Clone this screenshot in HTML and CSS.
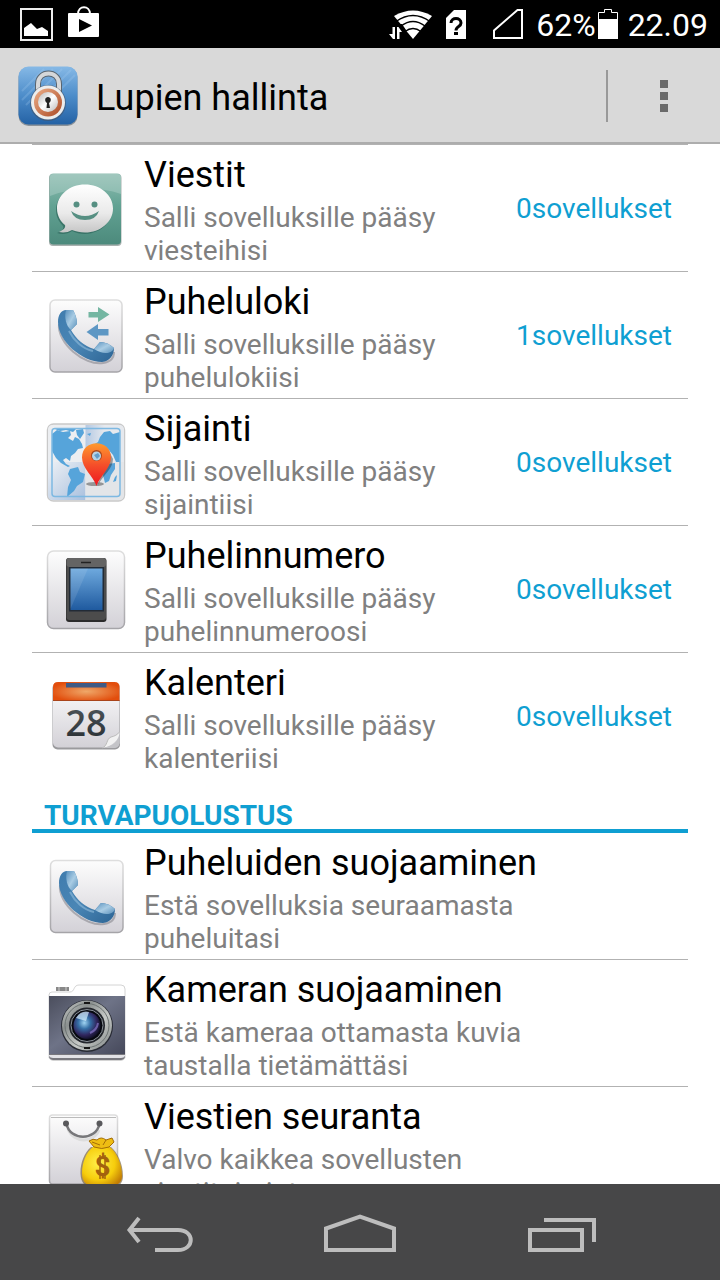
FILE: index.html
```html
<!DOCTYPE html>
<html lang="fi">
<head>
<meta charset="utf-8">
<meta name="viewport" content="width=device-width, initial-scale=1">
<title>Lupien hallinta</title>
<link rel="stylesheet" href="styles.css">
</head>
<body>
<svg class="defs" width="0" height="0" aria-hidden="true">
  <defs>
    <linearGradient id="tile" x1="0" y1="0" x2="0" y2="1"><stop offset="0" stop-color="#fdfdfd"/><stop offset="1" stop-color="#d3d1d7"/></linearGradient>
    <linearGradient id="tileEdge" x1="0" y1="0" x2="0" y2="1"><stop offset="0" stop-color="#dedede"/><stop offset="1" stop-color="#a5a4a8"/></linearGradient>
    <linearGradient id="teal" x1="0" y1="0" x2="0" y2="1"><stop offset="0" stop-color="#8fbdb1"/><stop offset=".45" stop-color="#62a293"/><stop offset="1" stop-color="#4c8a7c"/></linearGradient>
    <linearGradient id="bubble" x1="0" y1="0" x2="0" y2="1"><stop offset="0" stop-color="#fff"/><stop offset=".6" stop-color="#eaeaea"/><stop offset="1" stop-color="#c6c6c6"/></linearGradient>
    <linearGradient id="handle" x1="0" y1="0" x2="1" y2="1"><stop offset="0" stop-color="#3f7cae"/><stop offset=".5" stop-color="#4a86b5"/><stop offset="1" stop-color="#2d6595"/></linearGradient>
    <linearGradient id="cup" x1="0" y1="0" x2="1" y2="1"><stop offset="0" stop-color="#5a92bf"/><stop offset=".5" stop-color="#a9cce4"/><stop offset="1" stop-color="#5a90ba"/></linearGradient>
    <linearGradient id="pin" x1="0" y1="0" x2="0" y2="1"><stop offset="0" stop-color="#ff9a2e"/><stop offset=".5" stop-color="#f5502a"/><stop offset="1" stop-color="#ee1620"/></linearGradient>
    <linearGradient id="foldA" x1="0" y1="0" x2="1" y2="1"><stop offset="0" stop-color="#eef1f5"/><stop offset="1" stop-color="#a9c0de"/></linearGradient>
    <linearGradient id="foldB" x1="0" y1="0" x2="1" y2="0"><stop offset="0" stop-color="#b4c9e3"/><stop offset=".5" stop-color="#e6e9ee"/></linearGradient>
    <linearGradient id="screen" x1="0" y1="0" x2="0" y2="1"><stop offset="0" stop-color="#6ea9de"/><stop offset="1" stop-color="#1f5a9f"/></linearGradient>
    <radialGradient id="red" cx=".5" cy=".5" r=".55"><stop offset="0" stop-color="#efa869"/><stop offset="1" stop-color="#e24e0d"/></radialGradient>
    <linearGradient id="digits" x1="0" y1="0" x2="0" y2="1"><stop offset="0" stop-color="#555d62"/><stop offset="1" stop-color="#23292d"/></linearGradient>
    <linearGradient id="camera" x1="0" y1="0" x2="1" y2="1"><stop offset="0" stop-color="#4b4e5d"/><stop offset=".45" stop-color="#6e7387"/><stop offset="1" stop-color="#45485a"/></linearGradient>
    <linearGradient id="ring" x1="0" y1="0" x2="1" y2="1"><stop offset="0" stop-color="#cdd0ce"/><stop offset=".3" stop-color="#8b908f"/><stop offset=".6" stop-color="#c6c9c7"/><stop offset="1" stop-color="#7c8281"/></linearGradient>
    <radialGradient id="glass" cx=".4" cy=".4" r=".65"><stop offset="0" stop-color="#9fd4f2"/><stop offset=".35" stop-color="#356fa6"/><stop offset=".7" stop-color="#30265e"/><stop offset="1" stop-color="#0b0c1c"/></radialGradient>
    <radialGradient id="gold" cx=".4" cy=".4" r=".7"><stop offset="0" stop-color="#fff04a"/><stop offset=".6" stop-color="#f6cd0c"/><stop offset="1" stop-color="#c17b05"/></radialGradient>
    <linearGradient id="blueTile" x1="0" y1="0" x2="0" y2="1"><stop offset="0" stop-color="#86b9e6"/><stop offset=".5" stop-color="#4d8dca"/><stop offset="1" stop-color="#2462a5"/></linearGradient>
    <linearGradient id="copper" x1="0" y1="0" x2="1" y2="1"><stop offset="0" stop-color="#ecae88"/><stop offset="1" stop-color="#ab4a25"/></linearGradient>
    <linearGradient id="steel" x1="0" y1="0" x2="1" y2="1"><stop offset="0" stop-color="#b5b5b5"/><stop offset=".5" stop-color="#fff"/><stop offset="1" stop-color="#b9b9b9"/></linearGradient>
    <symbol id="handset" viewBox="0 0 80 80">
      <path d="M13 29C11 48 38 71 57 68C64 67 68 63 68 57" fill="none" stroke="#77777f" stroke-width="2" opacity=".5"/>
      <path d="M12 27C12 20 15 15 20 15L27 15C30 20 31 25 31 29L25 35C30 44 38 51 48 54L54 47C59 47 64 49 68 53C68 60 64 66 56 67C36 67 12 46 12 27Z" fill="url(#handle)"/>
      <path d="M20 15L27 15C30 20 31 25 31 29L25 35C20 31 18 22 20 15Z" fill="url(#cup)"/>
      <path d="M48 54L54 47C59 47 64 49 68 53C66 59 57 60 48 54Z" fill="url(#cup)"/>
      <path d="M23 36C28 46 37 54 47 56" fill="none" stroke="#86b3d5" stroke-width="2" opacity=".7"/>
    </symbol>
  </defs>
</svg>

<div class="status">
  <div class="status-group notices">
    <svg width="33" height="48" viewBox="0 0 33 48" role="img" aria-label="Kuvakaappaus"><rect x="1" y="9" width="31" height="31" fill="#000" stroke="#eee" stroke-width="2"/><path d="M4 36V28L11 23L17 29L22 27L28 31V36Z" fill="#fff"/></svg>
    <svg width="32" height="48" viewBox="0 0 32 48" role="img" aria-label="Play Kauppa"><path d="M10 14C10 5 22 5 22 14" fill="none" stroke="#fff" stroke-width="2"/><rect y="13" width="31" height="24" rx="1" fill="#fff"/><path d="M11 19V32L24 25.500Z" fill="#000"/></svg>
  </div>
  <div class="status-group signals">
    <svg width="44" height="48" viewBox="0 0 44 48" role="img" aria-label="Wi-Fi"><path d="M5 16Q24 5 43 16L24 39Z" fill="#fff"/><g fill="none" stroke="#000" stroke-width="1.500"><path d="M7 21.500Q24 9.500 41 21.500"/><path d="M12 26Q24 17 36 26"/><path d="M16 31.500Q24 25.500 32 31.500"/></g><path d="M0 24H13L17 30L14 40H0Z" fill="#000"/><path d="M3.500 27V34H0L4 39H6V27ZM8 39V27H9.500L13 32H10.500V39Z" fill="#fff"/></svg>
    <svg class="sim" width="20" height="48" viewBox="0 0 20 48" role="img" aria-label="SIM-kortti tuntematon"><path d="M8 10H20V39H0V18Z" fill="#fff"/><path d="M5 23C5 17 15 17 15 23C15 27 10 26 10 30.500" fill="none" stroke="#000" stroke-width="3"/><rect x="8" y="32" width="4" height="3" fill="#000"/></svg>
    <svg class="cell" width="30" height="48" viewBox="0 0 30 48" role="img" aria-label="Ei signaalia"><path d="M24.500 10H29V38H1V30.500Z" fill="none" stroke="#fff" stroke-width="2"/></svg>
    <span class="percent">62%</span>
    <svg width="20" height="48" viewBox="0 0 20 48" role="img" aria-label="Akku"><path d="M.5 38.500V12.500H6.500V9.500H13.500V12.500H19.500V38.500Z" fill="none" stroke="#fff"/><rect y="19" width="20" height="20" fill="#fff"/></svg>
    <time class="clock">22.09</time>
  </div>
</div>

<header class="bar">
  <svg width="60" height="60" viewBox="0 0 60 60" aria-hidden="true">
    <rect x=".5" y="1" width="59" height="59" rx="10" fill="#8b9299"/><rect x=".5" y=".5" width="59" height="58" rx="10" fill="url(#blueTile)"/>
    <path d="M4 25L26 3M4 34L35 3M8 39L44 3M14 43L53 4M36 30L57 9" stroke="#a6cdf0" stroke-width="2" opacity=".25"/>
    <path d="M20 27V18C20 4 41 4 41 18V27" fill="none" stroke="#596570" stroke-width="6"/><path d="M20 27V18C20 4 41 4 41 18V27" fill="none" stroke="#d5d7d9" stroke-width="4"/>
    <circle cx="30" cy="37" r="18" fill="#44556a" opacity=".6"/><circle cx="30" cy="36.500" r="17" fill="#eceded"/><circle cx="30" cy="36.500" r="14" fill="url(#copper)"/><circle cx="30" cy="36" r="10" fill="url(#steel)"/>
    <path d="M28.500 42L29 37C26 35 27 31 30 31S34 35 31 37L32 42Z" fill="#222"/>
  </svg>
  <h1 class="bar-title">Lupien hallinta</h1>
  <button class="more" type="button" aria-label="Lisää asetuksia"><span class="dot"></span><span class="dot"></span><span class="dot"></span></button>
</header>

<main class="content">
  <ul class="list">
    <li class="row">
      <svg class="icon" viewBox="0 0 80 80" aria-hidden="true">
        <rect x="3" y="5" width="72.500" height="72" rx="4" fill="#a9b1af"/><rect x="3.500" y="4.500" width="71.500" height="71" rx="4" fill="url(#teal)"/>
        <path d="M4 8Q4 5 8 5H71Q75 5 75 8V25Q40 13 4 27Z" fill="#c3ddd6" opacity=".35"/>
        <path d="M11 64C16 62 18 60 17 57C2 42 12 17 39 17C72 17 76 63 39 65C34 65 30 64 26 62C22 65 16 66 11 64Z" fill="#2f685c" opacity=".7"/>
        <path d="M13 63C17 61 20 59 19 56C15 53 11 47 11 39.500C11 26 23.500 15.500 39 15.500S67 26 67 39.500S54.500 63.500 39 63.500C34 63.500 30 62.500 26 61C22 63.500 17 64 13 63Z" fill="url(#bubble)"/>
        <g fill="#568f82"><circle cx="30.500" cy="35.500" r="3"/><circle cx="48.500" cy="35.500" r="3"/><path d="M25 42Q39 52 53 42Q50 51 39 51Q28 51 25 42Z"/></g>
      </svg>
      <div class="text"><h2 class="name">Viestit</h2><p class="note">Salli sovelluksille pääsy viesteihisi</p></div>
      <a class="count" href="#">0sovellukset</a>
    </li>
    <li class="row">
      <svg class="icon" viewBox="0 0 80 80" aria-hidden="true">
        <rect x="4" y="4" width="72" height="72" rx="5" fill="url(#tile)" stroke="url(#tileEdge)" stroke-width="1.500"/>
        <use href="#handset" y="-1" width="80" height="80"/>
        <path d="M42.500 16H52V11L63.500 18.500L52 26V21.500H42.500Z" fill="#74b6a2"/><path d="M62.500 33H52V28L40.500 36L52 44V39.500H62.500Z" fill="#5d97c4"/>
      </svg>
      <div class="text"><h2 class="name">Puheluloki</h2><p class="note">Salli sovelluksille pääsy puhelulokiisi</p></div>
      <a class="count" href="#">1sovellukset</a>
    </li>
    <li class="row">
      <svg class="icon" viewBox="0 0 80 80" aria-hidden="true">
        <rect x="1.500" y="1" width="77" height="77" rx="6" fill="#efefef" stroke="#c9c9c9" stroke-width="1.500"/>
        <path d="M2 7Q2 2 7 2H39.500V39H2Z" fill="#eceef1"/>
        <path d="M39.500 2H73Q78 2 78 7V39H39.500Z" fill="url(#foldB)"/>
        <path d="M2 39H39.500V77H7Q2 77 2 72Z" fill="url(#foldA)"/>
        <path d="M39.500 39H78V72Q78 77 73 77H39.500Z" fill="#e3e5e8"/>
        <g fill="#56a4da">
          <path d="M6 11L11 7L17 9L24 8L25 12L22 15L27 18L29 14L33 16L36 21L37 25L32 26L29 30L25 33L24 38L20 35L17 37L20 41L24 43L22 44L15 40L10 35L6 28Z"/>
          <path d="M6 6H30L27 9L20 7L14 8L9 6ZM30 7L37 6L38 10L34 16L31 12ZM41 11L45 10L44 13Z"/>
          <path d="M24 46L32 44L34 49L39 51L37 59L31 63L28 68L21 74L22 64L25 57L22 51Z"/>
          <path d="M47 22L52 19L54 14L58 9L64 8L67 11L74 9V39H70L67 32L62 26L57 24L52 26Z"/>
          <path d="M62 41L69 40L69 46L65 52L63 58L59 60L57 52ZM69 54L71 52L70 58L67 59Z"/>
        </g>
        <rect x="6" y="5.500" width="68" height="68" rx="3" fill="none" stroke="#7eb9e2" stroke-width="1.500"/>
        <ellipse cx="49" cy="61" rx="9" ry="2" fill="#333" opacity=".45"/><path d="M52 62C57 52 67 46 67 36L62 26Z" fill="#222" opacity=".4"/>
        <path d="M50.500 63C47 53 36 45 36 34.500C36 15.500 65 15.500 65 34.500C65 45 54 53 50.500 63Z" fill="url(#pin)"/>
        <circle cx="50.500" cy="32.500" r="5.500" fill="#a9481c"/><circle cx="50.500" cy="33" r="4.500" fill="#b6d2e6"/><path d="M48 32L52 30L54 33L51 36Z" fill="#629dca"/>
      </svg>
      <div class="text"><h2 class="name">Sijainti</h2><p class="note">Salli sovelluksille pääsy sijaintiisi</p></div>
      <a class="count" href="#">0sovellukset</a>
    </li>
    <li class="row">
      <svg class="icon" viewBox="0 0 80 80" aria-hidden="true">
        <rect x="1.500" y="1" width="77" height="77.500" rx="6" fill="url(#tile)" stroke="url(#tileEdge)" stroke-width="1.500"/>
        <rect x="20" y="8" width="40.500" height="64" rx="3" fill="#2b2b2b"/><rect x="20.500" y="8" width="39.500" height="62" rx="3" fill="#4c4c4c"/><rect x="20.500" y="8" width="39.500" height="9" rx="3" fill="#646464"/>
        <path d="M35 12.500H45" stroke="#222" stroke-width="1.500"/><rect x="23" y="17" width="35" height="44.500" fill="#222b36"/><rect x="24.500" y="18.500" width="32" height="41.500" fill="url(#screen)"/><path d="M24.500 18.500H42L24.500 59Z" fill="#fff" opacity=".1"/>
      </svg>
      <div class="text"><h2 class="name">Puhelinnumero</h2><p class="note">Salli sovelluksille pääsy puhelinnumeroosi</p></div>
      <a class="count" href="#">0sovellukset</a>
    </li>
    <li class="row">
      <svg class="icon" viewBox="0 0 80 80" aria-hidden="true">
        <rect x="6.500" y="6" width="67.500" height="66.500" rx="5" fill="#9a9a9d"/><rect x="7" y="5" width="66.500" height="65.500" rx="5" fill="url(#tile)"/>
        <path d="M7 24V10Q7 5 12 5H68.500Q73.500 5 73.500 10V24Z" fill="url(#red)"/><rect x="7" y="23" width="66.500" height="1" fill="#a9441a"/>
        <rect x="20" y="6" width="40.500" height="4.500" fill="#3f5a85"/>
        <text class="digits" x="40" y="59" text-anchor="middle" fill="url(#digits)">28</text>
        <path d="M56 71C62 69 60 62 65 60C69 59 71 58 73.500 55C74 62 66 70 56 71Z" fill="#f2f2f2"/><path d="M56 71C62 69 60 62 65 60C69 59 71 58 73.500 55" fill="none" stroke="#bbb"/><path d="M56 71C66 70 73 64 73.500 56V66Q73 71 68 71Z" fill="#c4c4c8"/>
      </svg>
      <div class="text"><h2 class="name">Kalenteri</h2><p class="note">Salli sovelluksille pääsy kalenteriisi</p></div>
      <a class="count" href="#">0sovellukset</a>
    </li>
  </ul>

  <h2 class="section">TURVAPUOLUSTUS</h2>
  <ul class="list">
    <li class="row">
      <svg class="icon" viewBox="0 0 80 80" aria-hidden="true">
        <rect x="4.500" y="3.500" width="72.500" height="72" rx="5" fill="url(#tile)" stroke="url(#tileEdge)" stroke-width="1.500"/>
        <use href="#handset" x="1" y="-1" width="80" height="80"/>
      </svg>
      <div class="text wide"><h2 class="name">Puheluiden suojaaminen</h2><p class="note">Estä sovelluksia seuraamasta puheluitasi</p></div>
    </li>
    <li class="row">
      <svg class="icon" viewBox="0 0 80 80" aria-hidden="true">
        <path d="M3 74V11Q3 8 6 8H24C29 8 27 1 33 1H75Q79 1 79 5V74Q78 76 75 76.500H7Q4 76 3 74Z" fill="#fff" stroke="#d4d4d4"/>
        <path d="M10 3H23V7H10Z" fill="#888"/><path d="M13 3V7M20 3V7" stroke="#aaa" stroke-width="2"/>
        <rect x="3" y="12" width="76" height="59" fill="url(#camera)"/><path d="M3 70H79V73Q78 76 75 76H7Q4 76 3 73Z" fill="#77777d"/><path d="M3 71H79V72Q78 74 75 74H7Q4 74 3 72Z" fill="#e2e2e6"/>
        <circle cx="41" cy="42" r="26" fill="#272a33"/><circle cx="41" cy="41.500" r="25" fill="url(#ring)"/><circle cx="41" cy="41.500" r="22" fill="none" stroke="#6d7473"/><circle cx="41" cy="41.500" r="18" fill="#22252b"/><circle cx="41" cy="41.500" r="16" fill="#06080f" stroke="#8b9299"/><circle cx="41" cy="41.500" r="13.500" fill="url(#glass)"/>
        <path d="M30 34Q35 26 43 28L40 37Z" fill="#d5effd" opacity=".7"/><path d="M44 49Q51 46 52 39" fill="none" stroke="#8877ca" stroke-width="2" opacity=".7"/><path d="M38 18H44V20H38ZM38 63H44V65H38Z" fill="#151515"/>
      </svg>
      <div class="text wide"><h2 class="name">Kameran suojaaminen</h2><p class="note">Estä kameraa ottamasta kuvia taustalla tietämättäsi</p></div>
    </li>
    <li class="row">
      <svg class="icon" viewBox="0 0 80 80" aria-hidden="true">
        <rect x="3.500" y="4" width="68" height="69" rx="3" fill="url(#tile)" stroke="url(#tileEdge)" stroke-width="1.500"/><path d="M5 6.500H70" stroke="#bbb"/>
        <path d="M22 18C28 33 48 32 53 19" fill="none" stroke="#ddd" stroke-width="3"/><path d="M20.500 13C24 30 50 30 53.500 13" fill="none" stroke="#77777a" stroke-width="2.500"/><g fill="#59595c"><circle cx="20" cy="12.500" r="3"/><circle cx="53.500" cy="12.500" r="3"/></g>
        <path d="M45 36C38 42 34 53 34.500 63C35 74 41 78 56 78S77 74 77 65C77 52 71 41 65 36Z" fill="#75603a" opacity=".65"/>
        <path d="M47 36C40 41 36 52 36 62C36 73 42 76 56 76S76 73 76 65C76 52 70 41 64 36Z" fill="url(#gold)"/>
        <path d="M43 30Q47 27 51 29Q55 25 60 29L66 27L68 31L63 36Q56 39 48 36Z" fill="#eebd13" stroke="#a36d08"/><path d="M46 31L54 34M60 29L57 34" stroke="#a36d08"/>
        <text class="dollar" x="56.500" y="65" text-anchor="middle">$</text><path d="M54 44V68M59 44V68" stroke="#a3610e" stroke-width="1.500"/>
      </svg>
      <div class="text wide"><h2 class="name">Viestien seuranta</h2><p class="note">Valvo kaikkea sovellusten viestitoimintaa</p></div>
    </li>
  </ul>
</main>

<nav class="nav">
  <button class="nav-button" type="button" aria-label="Takaisin"><svg width="72" height="40" viewBox="0 0 72 40"><path d="M6 18H54C71 18 71 38 54 38H31M15 6L5.500 18L15 30" fill="none" stroke="#bdbdbd" stroke-width="4"/></svg></button>
  <button class="nav-button" type="button" aria-label="Aloitusnäyttö"><svg width="72" height="40" viewBox="0 0 72 40"><path d="M2 38V16.500L36 4.500L70 16.500V38Z" fill="none" stroke="#bdbdbd" stroke-width="4"/></svg></button>
  <button class="nav-button" type="button" aria-label="Viimeisimmät"><svg width="72" height="40" viewBox="0 0 72 40"><path d="M6 18H58V38H6ZM20 8H70V30" fill="none" stroke="#bdbdbd" stroke-width="4"/></svg></button>
</nav>
</body>
</html>
```

FILE: styles.css
```css
* {
  box-sizing: border-box;
}

body {
  margin: 0;
  height: 100vh;
  display: flex;
  flex-direction: column;
  background: #fff;
  color: #000;
  font-family: Roboto, "Noto Sans", sans-serif;
}

h1,
h2,
p,
ul {
  margin: 0;
  padding: 0;
  font-weight: 400;
}

button {
  border: 0;
  background: none;
  padding: 0;
}

svg {
  display: block;
  flex: none;
}

.defs {
  position: absolute;
}

.status {
  flex: none;
  height: 48px;
  padding: 0 12px 0 20px;
  display: flex;
  justify-content: space-between;
  background: #000;
  color: #fff;
  font-size: 32px;
  line-height: 50px;
}

.status-group {
  display: flex;
}

.notices {
  gap: 15px;
}

.sim {
  margin-left: 13px;
}

.cell {
  margin: 0 13px 0 27px;
}

.percent {
  margin-right: 2px;
}

.clock {
  margin-left: 10px;
}

.bar {
  flex: none;
  height: 96px;
  padding: 2px 0 0 18px;
  display: flex;
  align-items: center;
  gap: 18px;
  background: #d9d9d9;
  border-bottom: 2px solid #adadad;
}

.bar-title {
  flex: 1;
  padding-top: 4px;
  font-size: 36px;
  line-height: 42px;
}

.more {
  width: 114px;
  height: 52px;
  border-left: 2px solid #999;
  display: flex;
  flex-direction: column;
  align-items: center;
  justify-content: center;
  gap: 4px;
}

.dot {
  width: 8px;
  height: 8px;
  background: #6a6a6a;
}

.content {
  flex: 1;
  min-height: 0;
  padding: 0 32px;
  overflow-y: auto;
  scrollbar-width: none;
}

.list {
  list-style: none;
}

.row {
  min-height: 127px;
  padding: 5px 16px 4px 14px;
  display: flex;
  align-items: center;
  gap: 18px;
  border-top: 1px solid #b2b2b2;
}

.section + .list .row:first-child {
  border-top: 0;
  min-height: 126px;
}

.icon {
  width: 80px;
  height: 80px;
}

.text {
  flex: 1;
  padding-top: 4px;
}

.wide {
  padding-right: 120px;
}

.name {
  margin-bottom: 5px;
  font-size: 36px;
  line-height: 42px;
}

.note {
  color: #808080;
  font-size: 28px;
  line-height: 33px;
}

.count {
  color: #0f9fd2;
  font-size: 28px;
  line-height: 33px;
  text-decoration: none;
}

.section {
  margin-top: 24px;
  padding-left: 12px;
  border-bottom: 4px solid #0f9fd2;
  color: #0f9fd2;
  font-size: 28px;
  font-weight: 700;
  line-height: 26px;
}

.digits {
  font-family: "Open Sans", sans-serif;
  font-size: 36px;
  font-weight: 600;
}

.dollar {
  font-size: 28px;
  font-weight: 700;
  fill: #a3610e;
}

.nav {
  flex: none;
  height: 96px;
  padding: 0 60px;
  display: grid;
  grid-template-columns: repeat(3, 1fr);
  background: #474748;
}

.nav-button {
  display: flex;
  align-items: center;
  justify-content: center;
}
```
